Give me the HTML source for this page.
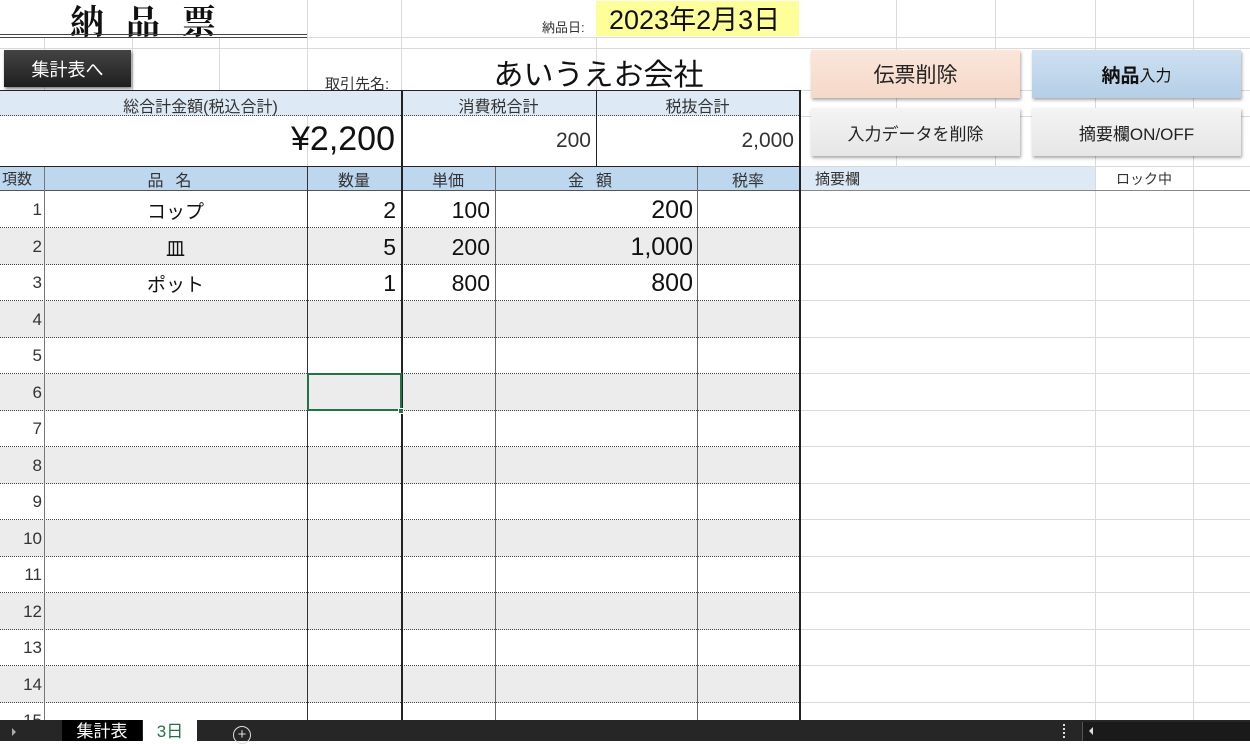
<!DOCTYPE html><html><head><meta charset="utf-8"><style>
*{margin:0;padding:0;box-sizing:border-box}
body{width:1250px;height:741px;overflow:hidden;background:#fff;position:relative;font-family:"Liberation Sans","Noto Sans CJK JP",sans-serif;color:#111}
.a{position:absolute}
.gl{position:absolute;background:#dadada}
.row{position:absolute;left:0;width:799px;height:37px;border-bottom:1px dotted #444}
.g{background:#ececec}
.n{position:absolute;left:0;width:42px;text-align:right;font-size:17px;color:#333}
.v{position:absolute;font-size:23px;text-align:right}
.btn{position:absolute;height:48px;display:flex;align-items:center;justify-content:center;box-shadow:1px 2px 3px rgba(0,0,0,.35)}
</style></head><body>
<div class="gl" style="left:307px;top:0;width:1px;height:166px"></div>
<div class="gl" style="left:401px;top:0;width:1px;height:90px"></div>
<div class="gl" style="left:596px;top:37px;width:1px;height:53px"></div>
<div class="gl" style="left:44px;top:37px;width:1px;height:53px"></div>
<div class="gl" style="left:132px;top:37px;width:1px;height:53px"></div>
<div class="gl" style="left:219px;top:37px;width:1px;height:53px"></div>
<div class="gl" style="left:896px;top:0;width:1px;height:166px"></div>
<div class="gl" style="left:995px;top:0;width:1px;height:166px"></div>
<div class="gl" style="left:1095px;top:0;width:1px;height:720px"></div>
<div class="gl" style="left:1193px;top:0;width:1px;height:720px"></div>
<div class="gl" style="left:0;top:37px;width:1250px;height:1px"></div>
<div class="gl" style="left:0;top:48px;width:1250px;height:1px"></div>
<div class="gl" style="left:799px;top:90px;width:451px;height:1px"></div>
<div class="gl" style="left:799px;top:116px;width:451px;height:1px"></div>
<div class="gl" style="left:799px;top:166px;width:451px;height:1px"></div>
<div class="a" style="left:70px;top:-5px;font-size:34px;letter-spacing:22px;font-weight:bold;font-family:'Liberation Serif','Noto Serif CJK SC',serif">納品票</div>
<div class="a" style="left:0;top:34px;width:307px;height:4px;border-top:1px solid #444;border-bottom:1px solid #444"></div>
<div class="a" style="left:542px;top:17px;font-size:13px;color:#333">納品日:</div>
<div class="a" style="left:596px;top:1px;width:203px;height:35px;background:#ffff99;font-size:27px;line-height:38px;padding-left:13px">2023年2月3日</div>
<div class="btn" style="left:4px;top:50px;width:127px;height:37px;background:linear-gradient(#444,#1e1e1e);color:#fff;font-size:18px;box-shadow:1px 2px 3px rgba(0,0,0,.5)">集計表へ</div>
<div class="a" style="left:325px;top:73px;font-size:15px;color:#333">取引先名:</div>
<div class="a" style="left:401px;top:50px;width:395px;text-align:center;font-size:30px">あいうえお会社</div>
<div class="a" style="left:0;top:90px;width:800px;height:77px;border-top:1.5px solid #222;border-bottom:1.5px solid #222;border-right:1.5px solid #222"></div>
<div class="a" style="left:0;top:91px;width:799px;height:25px;background:#dde9f5;border-bottom:1px dotted #444"></div>
<div class="a" style="left:401px;top:90px;width:1.5px;height:77px;background:#222"></div>
<div class="a" style="left:596px;top:90px;width:1px;height:77px;background:#222"></div>
<div class="a" style="left:0;top:93px;width:401px;text-align:center;font-size:16px;color:#333">総合計金額(税込合計)</div>
<div class="a" style="left:401px;top:93px;width:195px;text-align:center;font-size:16px;color:#333">消費税合計</div>
<div class="a" style="left:596px;top:93px;width:203px;text-align:center;font-size:16px;color:#333">税抜合計</div>
<div class="a" style="left:0;top:120px;width:395px;text-align:right;font-size:34px">¥2,200</div>
<div class="a" style="left:401px;top:129px;width:190px;text-align:right;font-size:21px;color:#333">200</div>
<div class="a" style="left:596px;top:129px;width:198px;text-align:right;font-size:21px;color:#333">2,000</div>
<div class="btn" style="left:811px;top:50px;width:209px;background:linear-gradient(#fbe6da,#f5d8c8);font-size:21px;color:#222">伝票削除</div>
<div class="btn" style="left:1032px;top:50px;width:209px;background:linear-gradient(#cfe0f0,#b4cfe7);font-size:19px;color:#111"><b>納品</b><span style="font-size:16px">入力</span></div>
<div class="btn" style="left:811px;top:108px;width:209px;background:linear-gradient(#f4f4f4,#e6e6e6);font-size:17px;color:#222">入力データを削除</div>
<div class="btn" style="left:1032px;top:108px;width:209px;background:linear-gradient(#f4f4f4,#e6e6e6);font-size:17px;color:#222">摘要欄ON/OFF</div>
<div class="a" style="left:0;top:167px;width:799px;height:24px;background:#bdd7ee;border-bottom:1.5px solid #555"></div>
<div class="a" style="left:800px;top:167px;width:295px;height:23px;background:#dde9f5"></div>
<div class="a" style="left:800px;top:190px;width:450px;height:1px;background:#888"></div>
<div class="a" style="left:815px;top:168px;font-size:15px;color:#333">摘要欄</div>
<div class="a" style="left:1095px;top:169px;width:98px;text-align:center;font-size:14px;color:#333">ロック中</div>
<div class="a" style="left:2px;top:168px;font-size:15px;color:#333">項数</div>
<div class="a" style="left:44px;top:167px;width:263px;text-align:center;font-size:16px;color:#333;letter-spacing:12px">品名</div>
<div class="a" style="left:307px;top:167px;width:94px;text-align:center;font-size:16px;color:#333">数量</div>
<div class="a" style="left:401px;top:167px;width:94px;text-align:center;font-size:16px;color:#333">単価</div>
<div class="a" style="left:495px;top:167px;width:202px;text-align:center;font-size:16px;color:#333;letter-spacing:12px">金額</div>
<div class="a" style="left:697px;top:167px;width:102px;text-align:center;font-size:16px;color:#333">税率</div>
<div class="row" style="top:191px"><span class="n" style="top:9px">1</span></div>
<div class="row g" style="top:227.5px"><span class="n" style="top:9px">2</span></div>
<div class="row" style="top:264px"><span class="n" style="top:9px">3</span></div>
<div class="row g" style="top:300.5px"><span class="n" style="top:9px">4</span></div>
<div class="row" style="top:337px"><span class="n" style="top:9px">5</span></div>
<div class="row g" style="top:373.5px"><span class="n" style="top:9px">6</span></div>
<div class="row" style="top:410px"><span class="n" style="top:9px">7</span></div>
<div class="row g" style="top:446.5px"><span class="n" style="top:9px">8</span></div>
<div class="row" style="top:483px"><span class="n" style="top:9px">9</span></div>
<div class="row g" style="top:519.5px"><span class="n" style="top:9px">10</span></div>
<div class="row" style="top:556px"><span class="n" style="top:9px">11</span></div>
<div class="row g" style="top:592.5px"><span class="n" style="top:9px">12</span></div>
<div class="row" style="top:629px"><span class="n" style="top:9px">13</span></div>
<div class="row g" style="top:665.5px"><span class="n" style="top:9px">14</span></div>
<div class="row" style="top:702px;border:none"><span class="n" style="top:9px">15</span></div>
<div class="gl" style="left:800px;top:227px;width:450px;height:1px"></div>
<div class="gl" style="left:800px;top:264px;width:450px;height:1px"></div>
<div class="gl" style="left:800px;top:300px;width:450px;height:1px"></div>
<div class="gl" style="left:800px;top:337px;width:450px;height:1px"></div>
<div class="gl" style="left:800px;top:373px;width:450px;height:1px"></div>
<div class="gl" style="left:800px;top:410px;width:450px;height:1px"></div>
<div class="gl" style="left:800px;top:446px;width:450px;height:1px"></div>
<div class="gl" style="left:800px;top:483px;width:450px;height:1px"></div>
<div class="gl" style="left:800px;top:519px;width:450px;height:1px"></div>
<div class="gl" style="left:800px;top:556px;width:450px;height:1px"></div>
<div class="gl" style="left:800px;top:592px;width:450px;height:1px"></div>
<div class="gl" style="left:800px;top:629px;width:450px;height:1px"></div>
<div class="gl" style="left:800px;top:665px;width:450px;height:1px"></div>
<div class="gl" style="left:800px;top:702px;width:450px;height:1px"></div>
<div class="a" style="left:44px;top:167px;width:1px;height:553px;background:#777"></div>
<div class="a" style="left:307px;top:167px;width:1px;height:553px;background:#333"></div>
<div class="a" style="left:401px;top:167px;width:1.5px;height:553px;background:#222"></div>
<div class="a" style="left:495px;top:167px;width:1px;height:553px;background:#666"></div>
<div class="a" style="left:697px;top:167px;width:1px;height:553px;background:#666"></div>
<div class="a" style="left:799px;top:90px;width:1.5px;height:630px;background:#222"></div>
<div class="a" style="left:44px;top:197px;width:263px;text-align:center;font-size:19px">コップ</div>
<div class="a" style="left:44px;top:234px;width:263px;text-align:center;font-size:19px">皿</div>
<div class="a" style="left:44px;top:270px;width:263px;text-align:center;font-size:19px">ポット</div>
<div class="v" style="left:307px;top:197px;width:89px">2</div>
<div class="v" style="left:307px;top:234px;width:89px">5</div>
<div class="v" style="left:307px;top:270px;width:89px">1</div>
<div class="v" style="left:401px;top:197px;width:89px">100</div>
<div class="v" style="left:401px;top:234px;width:89px">200</div>
<div class="v" style="left:401px;top:270px;width:89px">800</div>
<div class="v" style="left:495px;top:196px;width:198px;font-size:25px">200</div>
<div class="v" style="left:495px;top:233px;width:198px;font-size:25px">1,000</div>
<div class="v" style="left:495px;top:269px;width:198px;font-size:25px">800</div>
<div class="a" style="left:307px;top:373px;width:95px;height:38px;border:2px solid #217346"></div>
<div class="a" style="left:398px;top:408px;width:6px;height:6px;background:#217346;border:1px solid #fff"></div>
<div class="a" style="left:0;top:720px;width:1250px;height:21px;background:#262626"></div>
<div class="a" style="left:12px;top:728px;width:0;height:0;border-left:4px solid #aaa;border-top:4px solid transparent;border-bottom:4px solid transparent"></div>
<div class="a" style="left:62px;top:720px;width:80px;height:21px;background:#000;color:#fff;font-size:17px;text-align:center;line-height:24px">集計表</div>
<div class="a" style="left:143px;top:720px;width:54px;height:21px;background:#fff;color:#217346;font-size:17px;text-align:center;line-height:24px">3日</div>
<div class="a" style="left:233px;top:726px;width:18px;height:18px;border:1.5px solid #ddd;border-radius:50%;color:#ddd;font-size:15px;line-height:15px;text-align:center">+</div>
<div class="a" style="left:1063px;top:724px;width:2px;height:14px;border-left:2px dotted #ddd"></div>
<div class="a" style="left:1082px;top:722px;width:168px;height:19px;background:#1a1a1a;border-left:1px solid #555"></div>
<div class="a" style="left:1089px;top:727px;width:0;height:0;border-right:4px solid #ddd;border-top:4px solid transparent;border-bottom:4px solid transparent"></div>
</body></html>
